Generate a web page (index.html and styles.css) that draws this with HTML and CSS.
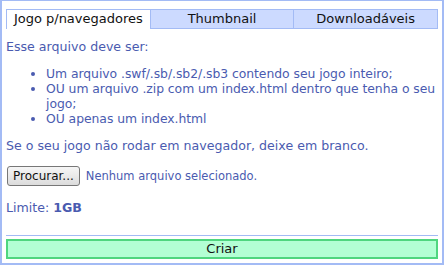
FILE: index.html
```html
<!DOCTYPE html>
<html>
<head>
<meta charset="utf-8">
<link rel="stylesheet" href="styles.css">
</head>
<body>
<div class="panel">
  <div class="tabs">
    <div class="tab active">Jogo p/navegadores</div>
    <div class="tab">Thumbnail</div>
    <div class="tab">Downloadáveis</div>
  </div>
  <div class="content">
    <p class="intro">Esse arquivo deve ser:</p>
    <ul class="list">
      <li>Um arquivo .swf/.sb/.sb2/.sb3 contendo seu jogo inteiro;</li>
      <li>OU um arquivo .zip com um index.html dentro que tenha o seu jogo;</li>
      <li>OU apenas um index.html</li>
    </ul>
    <p class="note">Se o seu jogo não rodar em navegador, deixe em branco.</p>
    <div class="file">
      <button class="browse">Procurar...</button>
      <span class="none">Nenhum arquivo selecionado.</span>
    </div>
    <p class="limit">Limite: <b>1GB</b></p>
  </div>
  <div class="footer">
    <button class="create">Criar</button>
  </div>
</div>
</body>
</html>
```
FILE: styles.css
```css
html, body {
  margin: 0;
  padding: 0;
  background: #fff;
  overflow: hidden;
}
body {
  font-family: "DejaVu Sans", Verdana, sans-serif;
  font-size: 12.6px;
  color: #4a5bb0;
}
.panel {
  box-sizing: border-box;
  width: 444px;
  height: 266px;
  margin-top: -1px;
  border: 2px solid #a3bbf5;
  padding: 8px 4px 0 4px;
  display: flex;
  flex-direction: column;
}
.tabs {
  display: flex;
  height: 20px;
}
.tab {
  flex: 1;
  box-sizing: border-box;
  border: 1px solid #a3bbf5;
  border-left: none;
  background: #ccdaff;
  color: #111;
  text-align: center;
  line-height: 18px;
  font-size: 13px;
}
.tab:first-child {
  border-left: 1px solid #a3bbf5;
}
.tab.active {
  background: #fff;
  border-bottom: none;
}
.content {
  flex: 1;
}
.intro {
  margin: 10px 0 0 0;
  line-height: 16px;
}
.list {
  margin: 11px -3px 0 0;
  padding-left: 40px;
  line-height: 15px;
  font-size: 12.4px;
  letter-spacing: -0.05px;
}
.list li {
  margin: 0;
}
.note {
  margin: 12px 0 0 0;
  line-height: 16px;
}
.file {
  display: flex;
  align-items: center;
  margin-top: 12px;
  gap: 6px;
}
.browse {
  font-family: "DejaVu Sans", Verdana, sans-serif;
  font-size: 12px;
  color: #111;
  height: 20px;
  padding: 0 5px;
  margin-left: 1px;
  border: 1px solid #777;
  border-radius: 3px;
  background: linear-gradient(#f6f6f6, #dcdcdc);
}
.none {
  font-size: 11.5px;
}
.limit {
  margin: 14px 0 0 0;
  line-height: 16px;
}
.limit b {
  font-weight: bold;
}
.footer {
  border-top: 1px solid #a3bbf5;
  padding-top: 3px;
  margin-bottom: 4px;
}
.create {
  display: block;
  width: 100%;
  height: 20px;
  box-sizing: border-box;
  border: 2px solid #4fd67f;
  background: #b3ffd4;
  color: #111;
  font-family: "DejaVu Sans", Verdana, sans-serif;
  font-size: 13px;
  line-height: 16px;
  padding: 0;
}
```
